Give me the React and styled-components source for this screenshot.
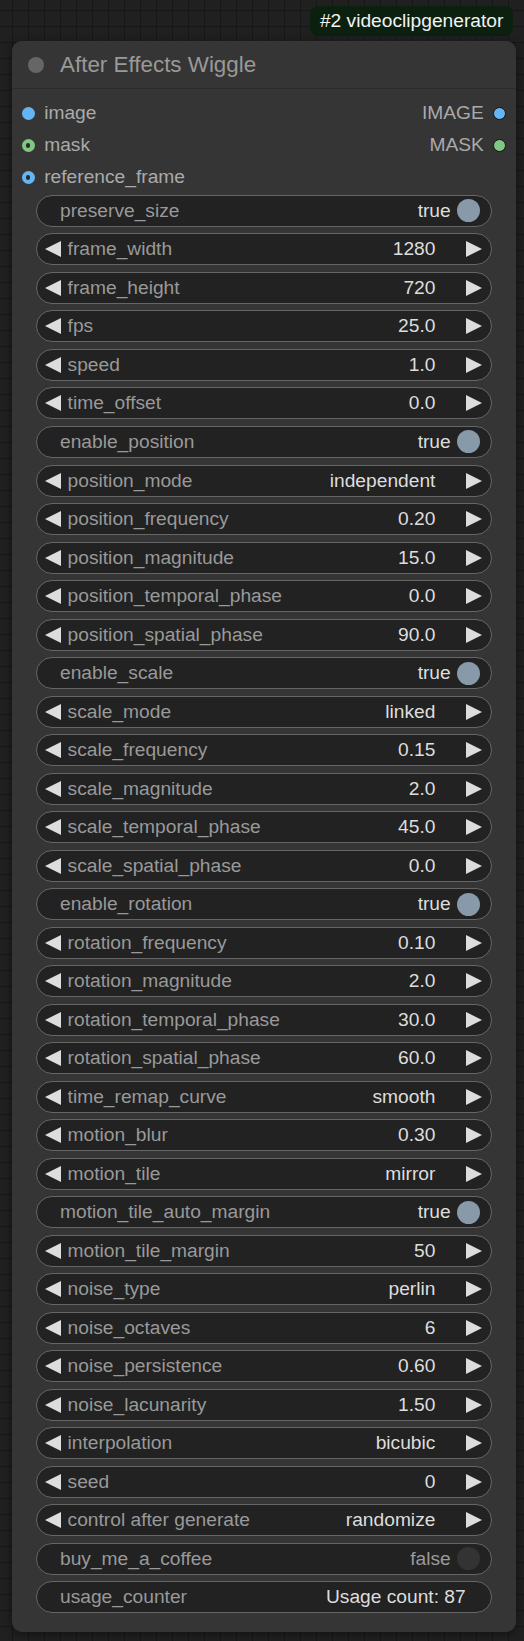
import React from 'react'
import styled, { createGlobalStyle } from 'styled-components'

const GlobalStyle = createGlobalStyle`
  html, body {
    margin: 0;
    padding: 0;
  }
  body {
    background-color: #202020;
    background-image:
      linear-gradient(to right, #171717 1px, transparent 1px),
      linear-gradient(to bottom, #171717 1px, transparent 1px);
    background-size: 16px 16px;
    background-position: 12px 10px;
    font-family: "Liberation Sans", Arial, sans-serif;
  }
`

const Canvas = styled.div`
  min-height: 1641px;
  box-sizing: border-box;
  padding: 6px 11px 0 12px;
  display: flex;
  flex-direction: column;
`

const BadgeRow = styled.div`
  display: flex;
  justify-content: flex-end;
`

const Badge = styled.div`
  height: 30px;
  line-height: 30px;
  padding: 0 9.6px;
  border-radius: 8px;
  background: #0c2010;
  color: #f2f2f2;
  font-size: 19.2px;
  white-space: nowrap;
`

const Node = styled.div`
  margin-top: 5px;
  width: 504px;
  background: #353535;
  border-radius: 10px;
  box-shadow: 0 2px 10px rgba(0, 0, 0, 0.45);
  overflow: hidden;
`

const TitleBar = styled.div`
  height: 48px;
  box-sizing: border-box;
  display: flex;
  align-items: center;
  gap: 16px;
  padding-left: 16px;
  background: #353535;
  border-bottom: 1px solid #2b2b2b;
  color: #999;
  font-size: 22.4px;
`

const TitleDot = styled.span`
  width: 16px;
  height: 16px;
  border-radius: 50%;
  background: #666;
`

const Body = styled.div`
  padding: 8.4px 0 19px;
`

const SlotRow = styled.div`
  height: 32px;
  display: flex;
  align-items: center;
  justify-content: space-between;
  color: #aaa;
  font-size: 19.2px;
`

const Slot = styled.div`
  display: flex;
  align-items: center;
  gap: 9.6px;
  padding: ${p => (p.$out ? '0 9.6px 0 0' : '0 0 0 9.6px')};
`

const Dot = styled.span`
  width: 13px;
  height: 13px;
  box-sizing: border-box;
  border-radius: 50%;
  background: ${p => p.$color};
  border: ${p => (p.$out ? '1.5px solid #111' : 'none')};
  display: flex;
  align-items: center;
  justify-content: center;
  &::after {
    content: '';
    display: ${p => (p.$hollow ? 'block' : 'none')};
    width: 4.5px;
    height: 4.5px;
    border-radius: 50%;
    background: #2a2a2a;
  }
`

const WidgetList = styled.div`
  margin-top: 1.5px;
  padding: 0 24px;
  display: flex;
  flex-direction: column;
  gap: 6.53px;
`

const Widget = styled.div`
  height: 32px;
  box-sizing: border-box;
  border: 1px solid #666;
  border-radius: 16px;
  background: #222;
  display: flex;
  align-items: center;
  font-size: 19.2px;
  line-height: 32px;
  padding: ${p => (p.$arrows ? '0 8.6px 0 7.6px' : '0 11.5px 0 23px')};
  white-space: nowrap;
`

const Label = styled.span`
  color: #999;
  flex: 1;
  margin-left: ${p => (p.$arrows ? '7px' : '0')};
`

const Value = styled.span`
  color: ${p => (p.$off ? '#999' : '#ddd')};
  margin-right: ${p => p.$gap || 0}px;
`

const Knob = styled.span`
  width: 23px;
  height: 23px;
  border-radius: 50%;
  background: ${p => (p.$on ? '#8899aa' : '#333')};
`

const Arrow = ({ dir }) => (
  <svg width="16" height="16" viewBox="0 0 16 16" style={{ flex: 'none' }}>
    {dir === 'left'
      ? <polygon points="16,0 0,8 16,16" fill="#ddd" />
      : <polygon points="0,0 16,8 0,16" fill="#ddd" />}
  </svg>
)

const slots = [
  { name: 'image', color: '#64b5f6', out: 'IMAGE' },
  { name: 'mask', color: '#81c784', hollow: true, out: 'MASK' },
  { name: 'reference_frame', color: '#64b5f6', hollow: true },
]

const widgets = [
  ['toggle', 'preserve_size', true],
  ['num', 'frame_width', '1280'],
  ['num', 'frame_height', '720'],
  ['num', 'fps', '25.0'],
  ['num', 'speed', '1.0'],
  ['num', 'time_offset', '0.0'],
  ['toggle', 'enable_position', true],
  ['num', 'position_mode', 'independent'],
  ['num', 'position_frequency', '0.20'],
  ['num', 'position_magnitude', '15.0'],
  ['num', 'position_temporal_phase', '0.0'],
  ['num', 'position_spatial_phase', '90.0'],
  ['toggle', 'enable_scale', true],
  ['num', 'scale_mode', 'linked'],
  ['num', 'scale_frequency', '0.15'],
  ['num', 'scale_magnitude', '2.0'],
  ['num', 'scale_temporal_phase', '45.0'],
  ['num', 'scale_spatial_phase', '0.0'],
  ['toggle', 'enable_rotation', true],
  ['num', 'rotation_frequency', '0.10'],
  ['num', 'rotation_magnitude', '2.0'],
  ['num', 'rotation_temporal_phase', '30.0'],
  ['num', 'rotation_spatial_phase', '60.0'],
  ['num', 'time_remap_curve', 'smooth'],
  ['num', 'motion_blur', '0.30'],
  ['num', 'motion_tile', 'mirror'],
  ['toggle', 'motion_tile_auto_margin', true],
  ['num', 'motion_tile_margin', '50'],
  ['num', 'noise_type', 'perlin'],
  ['num', 'noise_octaves', '6'],
  ['num', 'noise_persistence', '0.60'],
  ['num', 'noise_lacunarity', '1.50'],
  ['num', 'interpolation', 'bicubic'],
  ['num', 'seed', '0'],
  ['num', 'control after generate', 'randomize'],
  ['toggle', 'buy_me_a_coffee', false],
  ['text', 'usage_counter', 'Usage count: 87'],
]

const WidgetRow = ({ kind, label, value }) => {
  if (kind === 'num') {
    return (
      <Widget $arrows>
        <Arrow dir="left" />
        <Label $arrows>{label}</Label>
        <Value $gap={31}>{value}</Value>
        <Arrow dir="right" />
      </Widget>
    )
  }
  if (kind === 'toggle') {
    return (
      <Widget>
        <Label>{label}</Label>
        <Value $off={!value} $gap={5.8}>{value ? 'true' : 'false'}</Value>
        <Knob $on={value} />
      </Widget>
    )
  }
  return (
    <Widget>
      <Label>{label}</Label>
      <Value $gap={13.8}>{value}</Value>
    </Widget>
  )
}

export default function App() {
  return (
    <>
      <GlobalStyle />
      <Canvas>
        <BadgeRow>
          <Badge>#2 videoclipgenerator</Badge>
        </BadgeRow>
        <Node>
          <TitleBar>
            <TitleDot />
            After Effects Wiggle
          </TitleBar>
          <Body>
            {slots.map(s => (
              <SlotRow key={s.name}>
                <Slot>
                  <Dot $color={s.color} $hollow={s.hollow} />
                  {s.name}
                </Slot>
                {s.out && (
                  <Slot $out>
                    {s.out}
                    <Dot $color={s.color} $out />
                  </Slot>
                )}
              </SlotRow>
            ))}
            <WidgetList>
              {widgets.map(([kind, label, value]) => (
                <WidgetRow key={label} kind={kind} label={label} value={value} />
              ))}
            </WidgetList>
          </Body>
        </Node>
      </Canvas>
    </>
  )
}
